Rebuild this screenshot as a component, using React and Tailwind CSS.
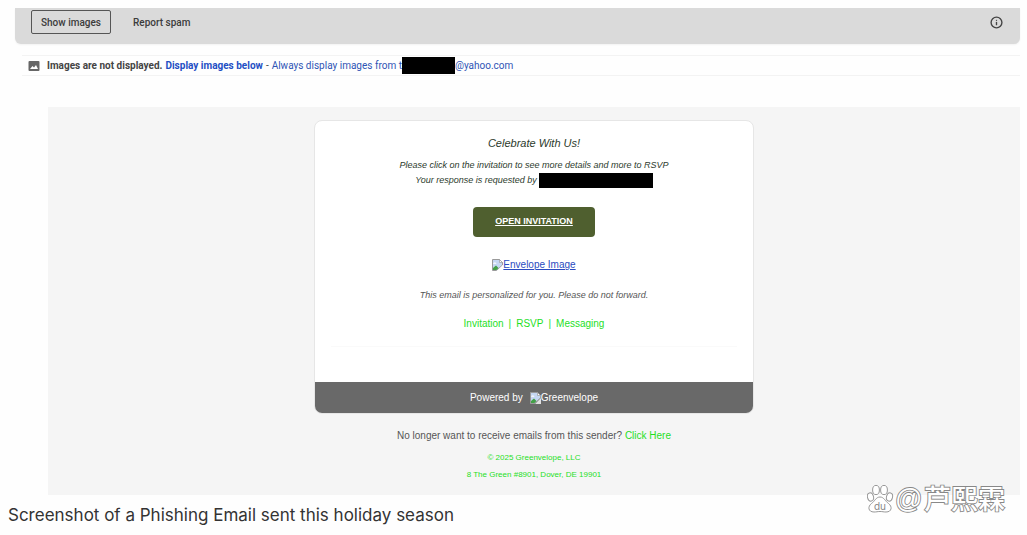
import { Info } from 'lucide-react';

function BrokenImage({ alt }) {
  return (
    <>
      <svg className="inline-block align-middle w-[11px] h-3" viewBox="0 0 11 12" aria-hidden="true">
        <path d="M0.5 0.5H7.5L10.5 3.5V6L4.5 11.5H0.5Z" fill="#c5d7f3" stroke="#9a9a9a" />
        <path d="M7.5 0.5V3.5H10.5Z" fill="#fff" stroke="#9a9a9a" strokeWidth="0.7" />
        <path d="M1 4.8C1.5 3 4 3 4.5 4.8Z" fill="#fff" />
        <path d="M1 11L1 9L4 6.5L6.5 9L4.5 11Z" fill="#43a047" />
        <path d="M5 12L11 6V12Z" fill="#fff" fillOpacity="0.8" />
      </svg>
      {alt}
    </>
  );
}

function Toolbar() {
  return (
    <header className="ml-[15px] mr-[7px] h-9 pl-4 pr-[17px] flex items-center bg-[#dadada] rounded-b-md shadow-xs">
      <div className="flex-1 flex items-center gap-[22px] pb-2 text-[10px] font-medium text-[#3c3c3c]">
        <button className="w-20 h-6 border border-[#555] rounded-xs">Show images</button>
        <button className="h-6">Report spam</button>
      </div>
      <button aria-label="Why is this message in spam?" className="pb-2 text-[#444]">
        <Info size={13} strokeWidth={2.5} />
      </button>
    </header>
  );
}

function ImagesNotice() {
  return (
    <div className="mt-[11px] ml-[22px] mr-[7px] h-[21px] pl-1.5 flex items-center border-y border-[#f3f3f3] text-[10px] whitespace-nowrap">
      <svg className="w-3 h-3 mr-[7px]" viewBox="0 0 12 12" aria-hidden="true">
        <rect x="0.5" y="1" width="11" height="10" rx="1" fill="#666" />
        <path d="M2 9L4.5 6L6 7.5L8 5L10 9Z" fill="#fff" />
      </svg>
      <span className="font-bold text-[#444]">Images are not displayed.</span>
      <a href="#display" className="ml-[3px] font-bold text-[#1f4fc4]">Display images below</a>
      <span className="mx-[3px] text-[#444]">-</span>
      <a href="#always" className="flex items-center text-[#2f55b5]">
        Always display images from t
        <span className="w-[53px] h-[17px] bg-black" />
        @yahoo.com
      </a>
    </div>
  );
}

function InvitationCard() {
  return (
    <article className="w-[440px] overflow-hidden bg-white border border-[#e6e6e6] rounded-lg text-center">
      <div className="px-4 pt-[15px] h-[261px] flex flex-col items-center">
        <h1 className="text-[11px] leading-[14px] italic text-[#2c3a2c]">Celebrate With Us!</h1>
        <p className="mt-2 text-[9px] leading-[15px] italic text-[#2c3a2c]">
          Please click on the invitation to see more details and more to RSVP
          <span className="flex items-center justify-center">
            Your response is requested by
            <span className="ml-0.5 w-[114px] h-[15px] bg-black" />
          </span>
        </p>
        <a
          href="#invitation"
          className="mt-[19px] h-[30px] w-[122px] shrink-0 flex items-center justify-center rounded bg-[#4f5f2f] text-[9px] font-bold text-white underline"
        >
          OPEN INVITATION
        </a>
        <a href="#envelope" className="mt-[21px] text-[10px] leading-[14px] text-[#2a4bc0] underline">
          <BrokenImage alt="Envelope Image" />
        </a>
        <p className="mt-4 text-[9px] leading-[14px] italic text-[#555]">
          This email is personalized for you. Please do not forward.
        </p>
        <nav className="mt-[15px] flex gap-[5px] text-[10px] leading-[14px] text-[#1fe01f]">
          <a href="#details">Invitation</a>
          <span>|</span>
          <a href="#rsvp">RSVP</a>
          <span>|</span>
          <a href="#messaging">Messaging</a>
        </nav>
        <hr className="mt-[15px] w-full border-[#fafafa]" />
      </div>
      <div className="h-[31px] flex items-center justify-center gap-[7px] bg-[#696969] text-[10px] text-white">
        <span>Powered by</span>
        <span>
          <BrokenImage alt="Greenvelope" />
        </span>
      </div>
    </article>
  );
}

function Watermark() {
  return (
    <svg className="absolute right-[15px] bottom-[15px] w-[145px] h-10" viewBox="0 0 145 40" aria-label="@芦熙霖">
      <g fill="#fff" stroke="#999" strokeWidth="1">
        <ellipse cx="3.500" cy="17" rx="3" ry="4.200" transform="rotate(-15 3.500 17)" />
        <ellipse cx="9" cy="10" rx="3.400" ry="4.600" />
        <ellipse cx="17" cy="10" rx="3.400" ry="4.600" />
        <ellipse cx="22.500" cy="17" rx="3" ry="4.200" transform="rotate(15 22.500 17)" />
        <path d="M13 17C9 17 8 21 4.500 23.500C0.500 26.500 1 32 7 32C10 32 10 31.500 13 31.500C16 31.500 16 32 19 32C25 32 25.500 26.500 21.500 23.500C18 21 17 17 13 17Z" />
      </g>
      <text x="13" y="30" textAnchor="middle" fontSize="10" fontFamily="Inter, sans-serif" fill="#888">du</text>
      <g fill="#fff" stroke="#888" strokeWidth="1.800" paintOrder="stroke" fontWeight="500" fontFamily="'Liberation Sans', 'Noto Sans CJK SC', sans-serif">
        <text x="28" y="28" fontSize="27">@</text>
        <text x="57" y="29" fontSize="27">芦熙霖</text>
      </g>
    </svg>
  );
}

export default function App() {
  return (
    <main className="relative pt-2 pb-2 bg-[#fefefe] font-['Roboto','Noto_Sans_CJK_SC',sans-serif]">
      <Toolbar />
      <ImagesNotice />
      <section className="mt-[31px] ml-12 mr-[7px] pt-[13px] pb-3 flex flex-col items-center bg-[#f5f5f5] font-['Liberation_Sans',Arial,sans-serif]">
        <InvitationCard />
        <p className="mt-[15px] text-[10px] leading-[14px] text-[#555]">
          No longer want to receive emails from this sender?{' '}
          <a href="#unsubscribe" className="text-[#1fe01f]">Click Here</a>
        </p>
        <address className="mt-1.5 text-center not-italic text-[8px] leading-[17px] text-[#1fe01f]">
          © 2025 Greenvelope, LLC
          <br />
          8 The Green #8901, Dover, DE 19901
        </address>
      </section>
      <p className="mt-2 ml-2 text-[17px] leading-6 text-[#333] font-['Inter',sans-serif]">
        Screenshot of a Phishing Email sent this holiday season
      </p>
      <Watermark />
    </main>
  );
}
